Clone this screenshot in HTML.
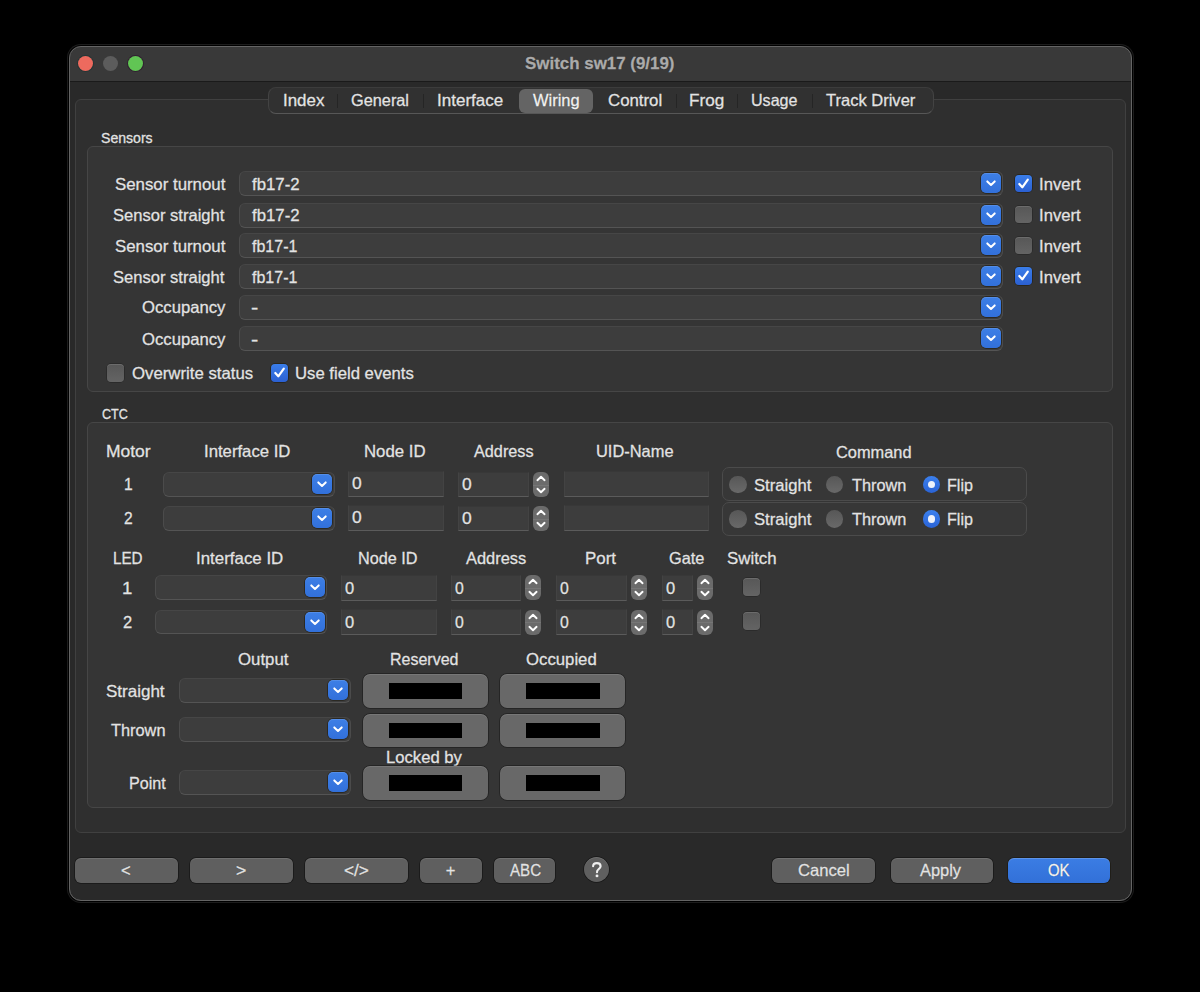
<!DOCTYPE html>
<html><head><meta charset="utf-8"><style>
html,body{margin:0;padding:0;background:#000;width:1200px;height:992px;overflow:hidden;}
body{position:relative;font-family:"Liberation Sans",sans-serif;}
body div{position:absolute;box-sizing:border-box;}
.t{white-space:nowrap;line-height:20px;transform-origin:0 50%;-webkit-text-stroke:0.3px currentColor;text-shadow:0 0 1px rgba(0,0,0,0.55);}
.win{border-radius:12px;background:#292929;box-shadow:0 0 0 1px #000,0 0 0 2px #1c1c1c;}
.winb{border-radius:12px;border:1px solid #646464;}
.title{background:#393939;border-radius:11px 11px 0 0;border-bottom:1px solid #1a1a1a;}
.tl{width:15px;height:15px;border-radius:50%;}
.tabbox{border-radius:6px;background:#2f2f2f;border:1px solid #404040;}
.seg{border-radius:8px;background:#313131;border:1px solid #434343;border-top-color:#3c3c3c;border-bottom-color:#575757;}
.segsel{border-radius:6px;background:#646464;}
.sep{width:1px;background:#252525;}
.grp{border-radius:6px;background:#353535;border:1px solid #464646;}
.pop{border-radius:6px;background:#3d3d3d;border:1px solid #4b4b4b;border-top-color:#464646;border-bottom-color:#545454;}
.blue{width:20px;height:20px;border-radius:5px;background:linear-gradient(#3d7fe6,#3270da);box-shadow:0 0 0 0.75px rgba(20,15,0,0.55),inset 0 1px 0 rgba(255,255,255,0.12);}
.blue svg,.stp svg,.cbon svg{position:absolute;left:0;top:0;}
.fld{background:#3d3d3d;border-top:1px solid #383838;border-bottom:1.5px solid #5b5b5b;border-left:1px solid #434343;border-right:1px solid #434343;}
.stp{width:16px;height:25px;border-radius:6px;background:#6b6b6b;}
.stp:after{content:"";position:absolute;left:0;right:0;top:12.5px;height:1px;background:rgba(255,255,255,0.08);}
.cbon{width:17.5px;height:17.5px;border-radius:4px;background:linear-gradient(#3a7de9,#2b60d2);box-shadow:0 0 0 0.75px rgba(20,15,0,0.5);}
.cboff{width:17.5px;height:17.5px;border-radius:4px;background:linear-gradient(#575757,#646464);box-shadow:0 0 0 0.75px rgba(0,0,0,0.25),inset 0 1px 0 rgba(255,255,255,0.12);}
.rdoff{width:17.5px;height:17.5px;border-radius:50%;background:linear-gradient(#575757,#696969);}
.rdon{width:17.5px;height:17.5px;border-radius:50%;background:linear-gradient(#3b80ee,#2a63d6);}
.rdon div{left:5px;top:5px;width:7.5px;height:7.5px;border-radius:50%;background:#eef2fb;}
.rbox{border-radius:7px;border:1px solid #4b4b4b;background:#373737;}
.btn{border-radius:6px;background:#5f5f5f;box-shadow:0 0 0 0.75px rgba(0,0,0,0.45),inset 0 1px 0 rgba(255,255,255,0.1);}
.obtn{border-radius:7px;background:#686868;box-shadow:0 0 0 0.75px rgba(0,0,0,0.4),inset 0 1px 0 rgba(255,255,255,0.1);}
.blk{background:#000;}
.okb{border-radius:6px;background:linear-gradient(#3b7de4,#3270d8);box-shadow:0 0 0 0.75px rgba(20,15,0,0.55),inset 0 1px 0 rgba(255,255,255,0.18);}
</style></head><body>

<div class="win" style="left:69px;top:46px;width:1062.60px;height:855.00px;"></div>
<div class="title" style="left:70px;top:47px;width:1060.60px;height:35.00px;"></div>
<div class="winb" style="left:69px;top:46px;width:1062.60px;height:855.00px;"></div>
<div class="tl" style="left:78.4px;top:56.2px;background:#ed6a5e;box-shadow:0 0 0 1px rgba(10,50,50,0.45);"></div>
<div class="tl" style="left:103.2px;top:56.2px;background:#5c5c5c;"></div>
<div class="tl" style="left:127.6px;top:56.2px;background:#61c554;box-shadow:0 0 0 1px rgba(40,0,40,0.45);"></div>
<div id="t0" class="t" style="left:524.60px;top:54px;font-size:16.8px;color:#ababab;font-weight:bold;transform:scaleX(1.0081);">Switch sw17 (9/19)</div>
<div class="tabbox" style="left:75px;top:99px;width:1050.60px;height:734.00px;"></div>
<div class="seg" style="left:268px;top:87px;width:666.00px;height:27.00px;"></div>
<div class="segsel" style="left:519px;top:88.5px;width:74.40px;height:24.10px;"></div>
<div class="sep" style="left:337px;top:94px;width:1.00px;height:14.00px;"></div>
<div class="sep" style="left:423px;top:94px;width:1.00px;height:14.00px;"></div>
<div class="sep" style="left:676px;top:94px;width:1.00px;height:14.00px;"></div>
<div class="sep" style="left:736.5px;top:94px;width:1.00px;height:14.00px;"></div>
<div class="sep" style="left:811.5px;top:94px;width:1.00px;height:14.00px;"></div>
<div id="t1" class="t" style="left:282.97px;top:90px;font-size:16.5px;color:#e3e3e3;transform:scaleX(1.0256);">Index</div>
<div id="t2" class="t" style="left:351.40px;top:90px;font-size:16.5px;color:#e3e3e3;transform:scaleX(0.9879);">General</div>
<div id="t3" class="t" style="left:437.19px;top:90px;font-size:16.5px;color:#e3e3e3;transform:scaleX(1.0312);">Interface</div>
<div id="t4" class="t" style="left:532.80px;top:90px;font-size:16.5px;color:#f2f2f2;transform:scaleX(0.9979);">Wiring</div>
<div id="t5" class="t" style="left:608.00px;top:90px;font-size:16.5px;color:#e3e3e3;transform:scaleX(1.0189);">Control</div>
<div id="t6" class="t" style="left:688.96px;top:90px;font-size:16.5px;color:#e3e3e3;transform:scaleX(1.0375);">Frog</div>
<div id="t7" class="t" style="left:751.41px;top:90px;font-size:16.5px;color:#e3e3e3;transform:scaleX(0.9745);">Usage</div>
<div id="t8" class="t" style="left:826.40px;top:90px;font-size:16.5px;color:#e3e3e3;transform:scaleX(1.0011);">Track Driver</div>
<div id="t9" class="t" style="left:101.40px;top:128px;font-size:14px;color:#e3e3e3;transform:scaleX(1.0059);">Sensors</div>
<div class="grp" style="left:87px;top:146px;width:1026.00px;height:246.00px;"></div>
<div id="t10" class="t" style="left:114.59px;top:174px;font-size:16.5px;color:#e3e3e3;transform:scaleX(1.0194);">Sensor turnout</div>
<div class="pop" style="left:239.2px;top:171.25px;width:763.80px;height:25.00px;"></div>
<div class="blue" style="left:980.50px;top:173.25px;"><svg width="20" height="20" viewBox="0 0 20 20"><path d="M6.3 8.4 L10 11.9 L13.7 8.4" fill="none" stroke="#fff" stroke-width="2" stroke-linecap="round" stroke-linejoin="round"/></svg></div>
<div id="t11" class="t" style="left:251.81px;top:174px;font-size:16.5px;color:#e3e3e3;transform:scaleX(1.0170);">fb17-2</div>
<div class="cbon" style="left:1014.8px;top:174.65px;"><svg width="17" height="17" viewBox="0 0 17 17"><path d="M4.3 9 L7.3 12.3 L12.8 4.6" fill="none" stroke="#fff" stroke-width="2.2" stroke-linecap="round" stroke-linejoin="round"/></svg></div>
<div id="t12" class="t" style="left:1039.20px;top:174px;font-size:16.5px;color:#e3e3e3;transform:scaleX(1.0098);">Invert</div>
<div id="t13" class="t" style="left:113.00px;top:205px;font-size:16.5px;color:#e3e3e3;transform:scaleX(1.0036);">Sensor straight</div>
<div class="pop" style="left:239.2px;top:202.5px;width:763.80px;height:25.00px;"></div>
<div class="blue" style="left:980.50px;top:204.50px;"><svg width="20" height="20" viewBox="0 0 20 20"><path d="M6.3 8.4 L10 11.9 L13.7 8.4" fill="none" stroke="#fff" stroke-width="2" stroke-linecap="round" stroke-linejoin="round"/></svg></div>
<div id="t14" class="t" style="left:251.81px;top:205px;font-size:16.5px;color:#e3e3e3;transform:scaleX(1.0170);">fb17-2</div>
<div class="cboff" style="left:1014.8px;top:205.9px;"></div>
<div id="t15" class="t" style="left:1039.20px;top:205px;font-size:16.5px;color:#e3e3e3;transform:scaleX(1.0098);">Invert</div>
<div id="t16" class="t" style="left:114.59px;top:236px;font-size:16.5px;color:#e3e3e3;transform:scaleX(1.0194);">Sensor turnout</div>
<div class="pop" style="left:239.2px;top:233.25px;width:763.80px;height:25.00px;"></div>
<div class="blue" style="left:980.50px;top:235.25px;"><svg width="20" height="20" viewBox="0 0 20 20"><path d="M6.3 8.4 L10 11.9 L13.7 8.4" fill="none" stroke="#fff" stroke-width="2" stroke-linecap="round" stroke-linejoin="round"/></svg></div>
<div id="t17" class="t" style="left:251.79px;top:236px;font-size:16.5px;color:#e3e3e3;transform:scaleX(0.9702);">fb17-1</div>
<div class="cboff" style="left:1014.8px;top:236.65px;"></div>
<div id="t18" class="t" style="left:1039.20px;top:236px;font-size:16.5px;color:#e3e3e3;transform:scaleX(1.0098);">Invert</div>
<div id="t19" class="t" style="left:113.00px;top:267px;font-size:16.5px;color:#e3e3e3;transform:scaleX(1.0036);">Sensor straight</div>
<div class="pop" style="left:239.2px;top:263.75px;width:763.80px;height:25.00px;"></div>
<div class="blue" style="left:980.50px;top:265.75px;"><svg width="20" height="20" viewBox="0 0 20 20"><path d="M6.3 8.4 L10 11.9 L13.7 8.4" fill="none" stroke="#fff" stroke-width="2" stroke-linecap="round" stroke-linejoin="round"/></svg></div>
<div id="t20" class="t" style="left:251.79px;top:267px;font-size:16.5px;color:#e3e3e3;transform:scaleX(0.9702);">fb17-1</div>
<div class="cbon" style="left:1014.8px;top:267.15px;"><svg width="17" height="17" viewBox="0 0 17 17"><path d="M4.3 9 L7.3 12.3 L12.8 4.6" fill="none" stroke="#fff" stroke-width="2.2" stroke-linecap="round" stroke-linejoin="round"/></svg></div>
<div id="t21" class="t" style="left:1039.20px;top:267px;font-size:16.5px;color:#e3e3e3;transform:scaleX(1.0098);">Invert</div>
<div id="t22" class="t" style="left:141.99px;top:297px;font-size:16.5px;color:#e3e3e3;transform:scaleX(1.0110);">Occupancy</div>
<div class="pop" style="left:239.2px;top:294.5px;width:763.80px;height:25.00px;"></div>
<div class="blue" style="left:980.50px;top:296.50px;"><svg width="20" height="20" viewBox="0 0 20 20"><path d="M6.3 8.4 L10 11.9 L13.7 8.4" fill="none" stroke="#fff" stroke-width="2" stroke-linecap="round" stroke-linejoin="round"/></svg></div>
<div id="t23" class="t" style="left:250.61px;top:297px;font-size:16.5px;color:#e3e3e3;transform:scaleX(1.3200);">-</div>
<div id="t24" class="t" style="left:141.99px;top:329px;font-size:16.5px;color:#e3e3e3;transform:scaleX(1.0110);">Occupancy</div>
<div class="pop" style="left:239.2px;top:326.25px;width:763.80px;height:25.00px;"></div>
<div class="blue" style="left:980.50px;top:328.25px;"><svg width="20" height="20" viewBox="0 0 20 20"><path d="M6.3 8.4 L10 11.9 L13.7 8.4" fill="none" stroke="#fff" stroke-width="2" stroke-linecap="round" stroke-linejoin="round"/></svg></div>
<div id="t25" class="t" style="left:250.61px;top:329px;font-size:16.5px;color:#e3e3e3;transform:scaleX(1.3200);">-</div>
<div class="cboff" style="left:106.5px;top:364.2px;"></div>
<div id="t26" class="t" style="left:132.00px;top:363px;font-size:16.5px;color:#e3e3e3;transform:scaleX(1.0168);">Overwrite status</div>
<div class="cbon" style="left:270.8px;top:364.2px;"><svg width="17" height="17" viewBox="0 0 17 17"><path d="M4.3 9 L7.3 12.3 L12.8 4.6" fill="none" stroke="#fff" stroke-width="2.2" stroke-linecap="round" stroke-linejoin="round"/></svg></div>
<div id="t27" class="t" style="left:294.79px;top:363px;font-size:16.5px;color:#e3e3e3;transform:scaleX(1.0120);">Use field events</div>
<div id="t28" class="t" style="left:102.00px;top:404px;font-size:14px;color:#e3e3e3;transform:scaleX(0.8966);">CTC</div>
<div class="grp" style="left:87px;top:422px;width:1026.00px;height:386.00px;"></div>
<div id="t29" class="t" style="left:105.74px;top:441px;font-size:16.5px;color:#e3e3e3;transform:scaleX(1.0585);">Motor</div>
<div id="t30" class="t" style="left:204.39px;top:441px;font-size:16.5px;color:#e3e3e3;transform:scaleX(1.0131);">Interface ID</div>
<div id="t31" class="t" style="left:363.98px;top:441px;font-size:16.5px;color:#e3e3e3;transform:scaleX(1.0169);">Node ID</div>
<div id="t32" class="t" style="left:473.60px;top:441px;font-size:16.5px;color:#e3e3e3;transform:scaleX(0.9836);">Address</div>
<div id="t33" class="t" style="left:596.40px;top:441px;font-size:16.5px;color:#e3e3e3;transform:scaleX(0.9949);">UID-Name</div>
<div id="t34" class="t" style="left:836.00px;top:442px;font-size:16.5px;color:#e3e3e3;transform:scaleX(0.9933);">Command</div>
<div id="t35" class="t" style="left:124.03px;top:474px;font-size:16.5px;color:#e3e3e3;transform:scaleX(0.9444);">1</div>
<div class="pop" style="left:163.1px;top:472.3px;width:171.70px;height:24.50px;"></div>
<div class="blue" style="left:312.30px;top:474.30px;"><svg width="20" height="20" viewBox="0 0 20 20"><path d="M6.3 8.4 L10 11.9 L13.7 8.4" fill="none" stroke="#fff" stroke-width="2" stroke-linecap="round" stroke-linejoin="round"/></svg></div>
<div class="fld" style="left:348px;top:471px;width:96.10px;height:25.80px;"></div>
<div id="t36" class="t" style="left:352.00px;top:473px;font-size:16.5px;color:#e3e3e3;transform:scaleX(1.0556);">0</div>
<div class="fld" style="left:458.3px;top:472px;width:70.30px;height:24.80px;"></div>
<div id="t37" class="t" style="left:461.97px;top:474px;font-size:16.5px;color:#e3e3e3;transform:scaleX(1.0556);">0</div>
<div class="stp" style="left:532.6px;top:472px;"><svg width="16" height="25" viewBox="0 0 16 25"><path d="M4.4 8.2 L8 4.7 L11.6 8.2" fill="none" stroke="#fff" stroke-width="1.9" stroke-linecap="round" stroke-linejoin="round"/><path d="M4.4 16.8 L8 20.3 L11.6 16.8" fill="none" stroke="#fff" stroke-width="1.9" stroke-linecap="round" stroke-linejoin="round"/></svg></div>
<div class="fld" style="left:563.6px;top:471px;width:145.40px;height:26.20px;"></div>
<div class="rbox" style="left:722px;top:467.0px;width:305.00px;height:34.00px;"></div>
<div class="rdoff" style="left:729.25px;top:475.55px;"></div>
<div id="t38" class="t" style="left:754.00px;top:475px;font-size:16.5px;color:#e3e3e3;transform:scaleX(1.0088);">Straight</div>
<div class="rdoff" style="left:825.75px;top:475.55px;"></div>
<div id="t39" class="t" style="left:852.19px;top:475px;font-size:16.5px;color:#e3e3e3;transform:scaleX(0.9891);">Thrown</div>
<div class="rdon" style="left:922.75px;top:475.55px;"><div></div></div>
<div id="t40" class="t" style="left:947.21px;top:475px;font-size:16.5px;color:#e3e3e3;transform:scaleX(0.9769);">Flip</div>
<div id="t41" class="t" style="left:124.03px;top:508px;font-size:16.5px;color:#e3e3e3;transform:scaleX(0.9444);">2</div>
<div class="pop" style="left:163.1px;top:506.3px;width:171.70px;height:24.50px;"></div>
<div class="blue" style="left:312.30px;top:508.30px;"><svg width="20" height="20" viewBox="0 0 20 20"><path d="M6.3 8.4 L10 11.9 L13.7 8.4" fill="none" stroke="#fff" stroke-width="2" stroke-linecap="round" stroke-linejoin="round"/></svg></div>
<div class="fld" style="left:348px;top:505px;width:96.10px;height:25.80px;"></div>
<div id="t42" class="t" style="left:352.00px;top:507px;font-size:16.5px;color:#e3e3e3;transform:scaleX(1.0556);">0</div>
<div class="fld" style="left:458.3px;top:506px;width:70.30px;height:24.80px;"></div>
<div id="t43" class="t" style="left:461.97px;top:508px;font-size:16.5px;color:#e3e3e3;transform:scaleX(1.0556);">0</div>
<div class="stp" style="left:532.6px;top:506px;"><svg width="16" height="25" viewBox="0 0 16 25"><path d="M4.4 8.2 L8 4.7 L11.6 8.2" fill="none" stroke="#fff" stroke-width="1.9" stroke-linecap="round" stroke-linejoin="round"/><path d="M4.4 16.8 L8 20.3 L11.6 16.8" fill="none" stroke="#fff" stroke-width="1.9" stroke-linecap="round" stroke-linejoin="round"/></svg></div>
<div class="fld" style="left:563.6px;top:505px;width:145.40px;height:26.20px;"></div>
<div class="rbox" style="left:722px;top:501.5px;width:305.00px;height:34.00px;"></div>
<div class="rdoff" style="left:729.25px;top:510.05px;"></div>
<div id="t44" class="t" style="left:754.00px;top:509px;font-size:16.5px;color:#e3e3e3;transform:scaleX(1.0088);">Straight</div>
<div class="rdoff" style="left:825.75px;top:510.05px;"></div>
<div id="t45" class="t" style="left:852.19px;top:509px;font-size:16.5px;color:#e3e3e3;transform:scaleX(0.9891);">Thrown</div>
<div class="rdon" style="left:922.75px;top:510.05px;"><div></div></div>
<div id="t46" class="t" style="left:947.21px;top:509px;font-size:16.5px;color:#e3e3e3;transform:scaleX(0.9769);">Flip</div>
<div id="t47" class="t" style="left:112.85px;top:548px;font-size:16.5px;color:#e3e3e3;transform:scaleX(0.9226);">LED</div>
<div id="t48" class="t" style="left:195.98px;top:548px;font-size:16.5px;color:#e3e3e3;transform:scaleX(1.0238);">Interface ID</div>
<div id="t49" class="t" style="left:357.61px;top:548px;font-size:16.5px;color:#e3e3e3;transform:scaleX(0.9833);">Node ID</div>
<div id="t50" class="t" style="left:466.00px;top:548px;font-size:16.5px;color:#e3e3e3;transform:scaleX(0.9951);">Address</div>
<div id="t51" class="t" style="left:584.98px;top:548px;font-size:16.5px;color:#e3e3e3;transform:scaleX(1.0233);">Port</div>
<div id="t52" class="t" style="left:668.61px;top:548px;font-size:16.5px;color:#e3e3e3;transform:scaleX(0.9914);">Gate</div>
<div id="t53" class="t" style="left:726.59px;top:548px;font-size:16.5px;color:#e3e3e3;transform:scaleX(1.0208);">Switch</div>
<div id="t54" class="t" style="left:121.88px;top:578px;font-size:16.5px;color:#e3e3e3;transform:scaleX(1.1250);">1</div>
<div class="pop" style="left:155.4px;top:575.4px;width:172.00px;height:24.20px;"></div>
<div class="blue" style="left:304.90px;top:577.40px;"><svg width="20" height="20" viewBox="0 0 20 20"><path d="M6.3 8.4 L10 11.9 L13.7 8.4" fill="none" stroke="#fff" stroke-width="2" stroke-linecap="round" stroke-linejoin="round"/></svg></div>
<div class="fld" style="left:340.7px;top:575px;width:96.00px;height:25.70px;"></div>
<div id="t55" class="t" style="left:345.00px;top:578px;font-size:16.5px;color:#e3e3e3;transform:scaleX(1.0000);">0</div>
<div class="fld" style="left:451px;top:575px;width:70.00px;height:25.70px;"></div>
<div id="t56" class="t" style="left:455.41px;top:578px;font-size:16.5px;color:#e3e3e3;transform:scaleX(0.9556);">0</div>
<div class="stp" style="left:525px;top:575.3px;"><svg width="16" height="25" viewBox="0 0 16 25"><path d="M4.4 8.2 L8 4.7 L11.6 8.2" fill="none" stroke="#fff" stroke-width="1.9" stroke-linecap="round" stroke-linejoin="round"/><path d="M4.4 16.8 L8 20.3 L11.6 16.8" fill="none" stroke="#fff" stroke-width="1.9" stroke-linecap="round" stroke-linejoin="round"/></svg></div>
<div class="fld" style="left:556px;top:575px;width:70.70px;height:25.70px;"></div>
<div id="t57" class="t" style="left:560.41px;top:578px;font-size:16.5px;color:#e3e3e3;transform:scaleX(0.9556);">0</div>
<div class="stp" style="left:630.7px;top:575.3px;"><svg width="16" height="25" viewBox="0 0 16 25"><path d="M4.4 8.2 L8 4.7 L11.6 8.2" fill="none" stroke="#fff" stroke-width="1.9" stroke-linecap="round" stroke-linejoin="round"/><path d="M4.4 16.8 L8 20.3 L11.6 16.8" fill="none" stroke="#fff" stroke-width="1.9" stroke-linecap="round" stroke-linejoin="round"/></svg></div>
<div class="fld" style="left:661.7px;top:575px;width:31.00px;height:25.70px;"></div>
<div id="t58" class="t" style="left:666.00px;top:578px;font-size:16.5px;color:#e3e3e3;transform:scaleX(1.0000);">0</div>
<div class="stp" style="left:696.7px;top:575.3px;"><svg width="16" height="25" viewBox="0 0 16 25"><path d="M4.4 8.2 L8 4.7 L11.6 8.2" fill="none" stroke="#fff" stroke-width="1.9" stroke-linecap="round" stroke-linejoin="round"/><path d="M4.4 16.8 L8 20.3 L11.6 16.8" fill="none" stroke="#fff" stroke-width="1.9" stroke-linecap="round" stroke-linejoin="round"/></svg></div>
<div class="cboff" style="left:742.7px;top:578px;"></div>
<div id="t59" class="t" style="left:123.00px;top:612px;font-size:16.5px;color:#e3e3e3;transform:scaleX(1.0000);">2</div>
<div class="pop" style="left:155.4px;top:609.6999999999999px;width:172.00px;height:24.20px;"></div>
<div class="blue" style="left:304.90px;top:611.70px;"><svg width="20" height="20" viewBox="0 0 20 20"><path d="M6.3 8.4 L10 11.9 L13.7 8.4" fill="none" stroke="#fff" stroke-width="2" stroke-linecap="round" stroke-linejoin="round"/></svg></div>
<div class="fld" style="left:340.7px;top:609.3px;width:96.00px;height:25.70px;"></div>
<div id="t60" class="t" style="left:345.00px;top:612px;font-size:16.5px;color:#e3e3e3;transform:scaleX(1.0000);">0</div>
<div class="fld" style="left:451px;top:609.3px;width:70.00px;height:25.70px;"></div>
<div id="t61" class="t" style="left:455.41px;top:612px;font-size:16.5px;color:#e3e3e3;transform:scaleX(0.9556);">0</div>
<div class="stp" style="left:525px;top:609.5999999999999px;"><svg width="16" height="25" viewBox="0 0 16 25"><path d="M4.4 8.2 L8 4.7 L11.6 8.2" fill="none" stroke="#fff" stroke-width="1.9" stroke-linecap="round" stroke-linejoin="round"/><path d="M4.4 16.8 L8 20.3 L11.6 16.8" fill="none" stroke="#fff" stroke-width="1.9" stroke-linecap="round" stroke-linejoin="round"/></svg></div>
<div class="fld" style="left:556px;top:609.3px;width:70.70px;height:25.70px;"></div>
<div id="t62" class="t" style="left:560.41px;top:612px;font-size:16.5px;color:#e3e3e3;transform:scaleX(0.9556);">0</div>
<div class="stp" style="left:630.7px;top:609.5999999999999px;"><svg width="16" height="25" viewBox="0 0 16 25"><path d="M4.4 8.2 L8 4.7 L11.6 8.2" fill="none" stroke="#fff" stroke-width="1.9" stroke-linecap="round" stroke-linejoin="round"/><path d="M4.4 16.8 L8 20.3 L11.6 16.8" fill="none" stroke="#fff" stroke-width="1.9" stroke-linecap="round" stroke-linejoin="round"/></svg></div>
<div class="fld" style="left:661.7px;top:609.3px;width:31.00px;height:25.70px;"></div>
<div id="t63" class="t" style="left:666.00px;top:612px;font-size:16.5px;color:#e3e3e3;transform:scaleX(1.0000);">0</div>
<div class="stp" style="left:696.7px;top:609.5999999999999px;"><svg width="16" height="25" viewBox="0 0 16 25"><path d="M4.4 8.2 L8 4.7 L11.6 8.2" fill="none" stroke="#fff" stroke-width="1.9" stroke-linecap="round" stroke-linejoin="round"/><path d="M4.4 16.8 L8 20.3 L11.6 16.8" fill="none" stroke="#fff" stroke-width="1.9" stroke-linecap="round" stroke-linejoin="round"/></svg></div>
<div class="cboff" style="left:742.7px;top:612.3px;"></div>
<div id="t64" class="t" style="left:237.60px;top:649px;font-size:16.5px;color:#e3e3e3;transform:scaleX(1.0180);">Output</div>
<div id="t65" class="t" style="left:390.01px;top:649px;font-size:16.5px;color:#e3e3e3;transform:scaleX(0.9700);">Reserved</div>
<div id="t66" class="t" style="left:525.99px;top:649px;font-size:16.5px;color:#e3e3e3;transform:scaleX(1.0145);">Occupied</div>
<div id="t67" class="t" style="left:386.39px;top:747px;font-size:16.5px;color:#e3e3e3;transform:scaleX(1.0081);">Locked by</div>
<div id="t68" class="t" style="left:106.39px;top:681px;font-size:16.5px;color:#e3e3e3;transform:scaleX(1.0298);">Straight</div>
<div class="pop" style="left:179px;top:678px;width:171.50px;height:25.00px;"></div>
<div class="blue" style="left:328.00px;top:680.00px;"><svg width="20" height="20" viewBox="0 0 20 20"><path d="M6.3 8.4 L10 11.9 L13.7 8.4" fill="none" stroke="#fff" stroke-width="2" stroke-linecap="round" stroke-linejoin="round"/></svg></div>
<div class="obtn" style="left:362.7px;top:674.3px;width:125.40px;height:33.60px;"></div>
<div class="blk" style="left:388.7px;top:683.3px;width:73.50px;height:15.60px;"></div>
<div class="obtn" style="left:500px;top:674.3px;width:125.40px;height:33.60px;"></div>
<div class="blk" style="left:526px;top:683.3px;width:73.50px;height:15.60px;"></div>
<div id="t69" class="t" style="left:110.80px;top:720px;font-size:16.5px;color:#e3e3e3;transform:scaleX(0.9909);">Thrown</div>
<div class="pop" style="left:179px;top:717px;width:171.50px;height:25.00px;"></div>
<div class="blue" style="left:328.00px;top:719.00px;"><svg width="20" height="20" viewBox="0 0 20 20"><path d="M6.3 8.4 L10 11.9 L13.7 8.4" fill="none" stroke="#fff" stroke-width="2" stroke-linecap="round" stroke-linejoin="round"/></svg></div>
<div class="obtn" style="left:362.7px;top:713.5px;width:125.40px;height:33.60px;"></div>
<div class="blk" style="left:388.7px;top:722.5px;width:73.50px;height:15.60px;"></div>
<div class="obtn" style="left:500px;top:713.5px;width:125.40px;height:33.60px;"></div>
<div class="blk" style="left:526px;top:722.5px;width:73.50px;height:15.60px;"></div>
<div id="t70" class="t" style="left:128.62px;top:773px;font-size:16.5px;color:#e3e3e3;transform:scaleX(0.9757);">Point</div>
<div class="pop" style="left:179px;top:770.2px;width:171.50px;height:25.00px;"></div>
<div class="blue" style="left:328.00px;top:772.20px;"><svg width="20" height="20" viewBox="0 0 20 20"><path d="M6.3 8.4 L10 11.9 L13.7 8.4" fill="none" stroke="#fff" stroke-width="2" stroke-linecap="round" stroke-linejoin="round"/></svg></div>
<div class="obtn" style="left:362.7px;top:766px;width:125.40px;height:33.60px;"></div>
<div class="blk" style="left:388.7px;top:775px;width:73.50px;height:15.60px;"></div>
<div class="obtn" style="left:500px;top:766px;width:125.40px;height:33.60px;"></div>
<div class="blk" style="left:526px;top:775px;width:73.50px;height:15.60px;"></div>
<div class="btn" style="left:75px;top:858px;width:102.50px;height:25.00px;"></div>
<div class="btn" style="left:190px;top:858px;width:102.50px;height:25.00px;"></div>
<div class="btn" style="left:305px;top:858px;width:102.50px;height:25.00px;"></div>
<div class="btn" style="left:420px;top:858px;width:62.00px;height:25.00px;"></div>
<div class="btn" style="left:494px;top:858px;width:61.40px;height:25.00px;"></div>
<div class="btn" style="left:772px;top:858px;width:103.00px;height:25.00px;"></div>
<div class="btn" style="left:890.5px;top:858px;width:102.20px;height:25.00px;"></div>
<div class="okb" style="left:1008px;top:858px;width:102.30px;height:25.00px;"></div>
<div style="left:584px;top:857.2px;width:25px;height:25px;border-radius:50%;background:#5f5f5f;box-shadow:0 0 0 0.75px rgba(0,0,0,0.45),inset 0 1px 0 rgba(255,255,255,0.1);"><svg width="25" height="25" viewBox="0 0 25 25" style="position:absolute;left:0;top:0"><path d="M9.1 9.3 C9.1 7.1 10.7 6.1 12.9 6.1 C15.1 6.1 16.6 7.4 16.6 9.3 C16.6 11 15.3 11.8 14.3 12.5 C13.4 13.2 13 13.9 13 15.2" fill="none" stroke="#f0f0f0" stroke-width="2.1" stroke-linecap="round"/><circle cx="13" cy="18.9" r="1.45" fill="#f0f0f0"/></svg></div>
<div id="t71" class="t" style="left:121.00px;top:860px;font-size:16.5px;color:#e3e3e3;transform:scaleX(1.0000);">&lt;</div>
<div id="t72" class="t" style="left:235.76px;top:860px;font-size:16.5px;color:#e3e3e3;transform:scaleX(1.0667);">&gt;</div>
<div id="t73" class="t" style="left:343.77px;top:860px;font-size:16.5px;color:#e3e3e3;transform:scaleX(1.0435);">&lt;/&gt;</div>
<div id="t74" class="t" style="left:445.80px;top:860px;font-size:16.5px;color:#e3e3e3;transform:scaleX(1.0000);">+</div>
<div id="t75" class="t" style="left:509.53px;top:860px;font-size:16.5px;color:#e3e3e3;transform:scaleX(0.9176);">ABC</div>
<div id="t76" class="t" style="left:797.59px;top:860px;font-size:16.5px;color:#e3e3e3;transform:scaleX(1.0080);">Cancel</div>
<div id="t77" class="t" style="left:920.40px;top:860px;font-size:16.5px;color:#e3e3e3;transform:scaleX(0.9929);">Apply</div>
<div id="t78" class="t" style="left:1047.62px;top:860px;font-size:16.5px;color:#f4f4f4;transform:scaleX(0.9042);">OK</div>
</body></html>
